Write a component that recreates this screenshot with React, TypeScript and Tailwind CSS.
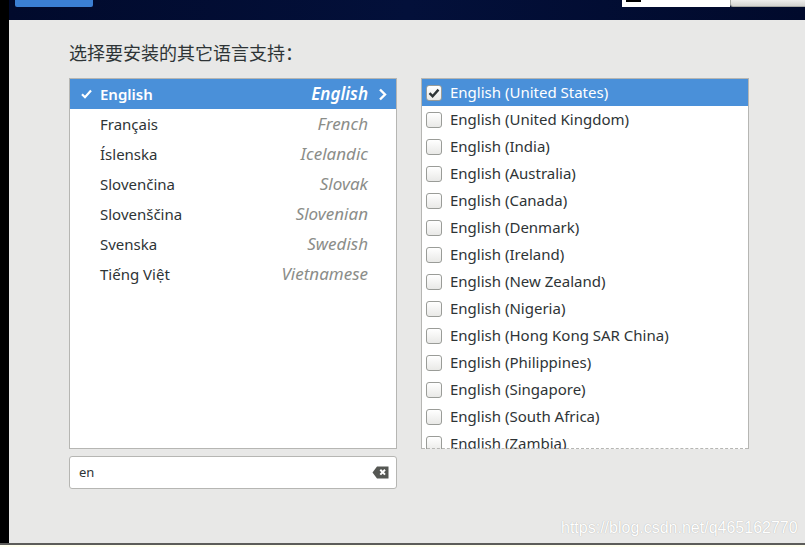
import React from "react";

const langs = [
  { native: "English", english: "English", selected: true },
  { native: "Français", english: "French" },
  { native: "Íslenska", english: "Icelandic" },
  { native: "Slovenčina", english: "Slovak" },
  { native: "Slovenščina", english: "Slovenian" },
  { native: "Svenska", english: "Swedish" },
  { native: "Tiếng Việt", english: "Vietnamese" },
];

const locales = [
  "United States",
  "United Kingdom",
  "India",
  "Australia",
  "Canada",
  "Denmark",
  "Ireland",
  "New Zealand",
  "Nigeria",
  "Hong Kong SAR China",
  "Philippines",
  "Singapore",
  "South Africa",
  "Zambia",
];

function CheckBox({ checked }: { checked?: boolean }) {
  return (
    <div className="w-[16px] h-[16px] shrink-0 rounded-[3px] border border-[#9a9c98] bg-gradient-to-b from-white to-[#e9e9e7] flex items-center justify-center">
      {checked && (
        <svg width="12" height="12" viewBox="0 0 12 12">
          <path d="M1.5 6.2 L4.6 9.2 L10.5 2.6" fill="none" stroke="#2e3436" strokeWidth="2.4" />
        </svg>
      )}
    </div>
  );
}

export default function App() {
  return (
    <div
      className="w-[805px] h-[547px] flex flex-col overflow-hidden bg-[#fffff0]"
      style={{ fontFamily: '"Noto Sans", "Noto Sans CJK SC", sans-serif' }}
    >
      <div className="h-[543px] flex shrink-0">
        <div className="w-[9px] bg-black shrink-0" />
        <div className="flex-1 flex flex-col relative">
          {/* top bar */}
          <div className="h-[20px] shrink-0 flex items-start bg-gradient-to-r from-[#010a2c] via-[#03103a] to-[#010a2c]">
            <div className="ml-[6px] w-[78px] h-[7px] rounded-b-[2px] bg-[#3b7fd3]" />
            <div className="flex-1" />
            <div className="w-[108px] h-[7px] bg-white pl-[4px]">
              <div className="w-[15px] h-[2px] bg-black" />
            </div>
            <div className="w-[75px] h-[7px] rounded-bl-[3px] bg-gradient-to-b from-[#eeeeec] to-[#d3d3d0] border-l border-b border-[#a9aaa6]" />
          </div>

          {/* body */}
          <div className="flex-1 bg-[#e8e8e7] pl-[60px] pt-[21px]">
            <div className="text-[18px] leading-[24px] text-[#2e3436] h-[37px]">选择要安装的其它语言支持：</div>
            <div className="flex gap-[24px]">
              <div className="w-[328px] flex flex-col">
                <div className="h-[371px] border border-[#b6b6b3] bg-white">
                  {langs.map((l) => (
                    <div
                      key={l.native}
                      className={`h-[30px] flex items-center ${l.selected ? "bg-[#4a90d9] text-white" : "text-[#2e3436]"}`}
                    >
                      <div className="w-[30px] flex justify-center pl-[2px]">
                        {l.selected && (
                          <svg width="11" height="10" viewBox="0 0 11 10">
                            <path d="M1 5.2 L4 8.2 L10 1.5" fill="none" stroke="white" strokeWidth="2.2" />
                          </svg>
                        )}
                      </div>
                      <div className={`flex-1 text-[15px] ${l.selected ? "font-semibold" : ""}`}>{l.native}</div>
                      <div className={`text-[17px] italic ${l.selected ? "text-white font-semibold" : "text-[#8b8d89]"}`}>{l.english}</div>
                      <div className="w-[28px] flex justify-center">
                        {l.selected && (
                          <svg width="9" height="13" viewBox="0 0 9 13">
                            <path d="M2 1.5 L7 6.5 L2 11.5" fill="none" stroke="white" strokeWidth="2.4" />
                          </svg>
                        )}
                      </div>
                    </div>
                  ))}
                </div>
                <div className="mt-[7px] h-[33px] rounded-[3px] border border-[#b6b6b3] bg-white flex items-center pl-[9px] pr-[7px]">
                  <span className="flex-1 text-[13px] text-[#2e3436]">en</span>
                  <svg width="17" height="13" viewBox="0 0 17 13">
                    <path d="M5 0.5 H16.5 V12.5 H5 L0.5 6.5 Z" fill="#555753" />
                    <path d="M8.3 3.8 L13 8.6 M13 3.8 L8.3 8.6" stroke="white" strokeWidth="2" />
                  </svg>
                </div>
              </div>

              <div className="w-[328px] h-[371px] border border-[#b6b6b3] border-b-0 bg-white overflow-hidden relative">
                {locales.map((loc, i) => (
                  <div
                    key={loc}
                    className={`h-[27px] flex items-center pl-[4px] gap-[8px] text-[15px] ${i === 0 ? "bg-[#4a90d9] text-white" : "text-[#2e3436]"}`}
                  >
                    <CheckBox checked={i === 0} />
                    <span>English ({loc})</span>
                  </div>
                ))}
                <div className="absolute left-0 right-0 bottom-0 border-b border-dashed border-[#b6b6b3]" />
              </div>
            </div>
          </div>

          <div
            className="absolute left-[552px] top-[516px] text-[16px] text-white"
            style={{ fontFamily: '"Liberation Sans", Arial, sans-serif', textShadow: "0 0 1px rgba(0,0,0,0.3)" }}
          >
            https://blog.csdn.net/q465162770
          </div>
        </div>
      </div>
      <div className="h-[2px] bg-[#5c5c5a] shrink-0" />
    </div>
  );
}
